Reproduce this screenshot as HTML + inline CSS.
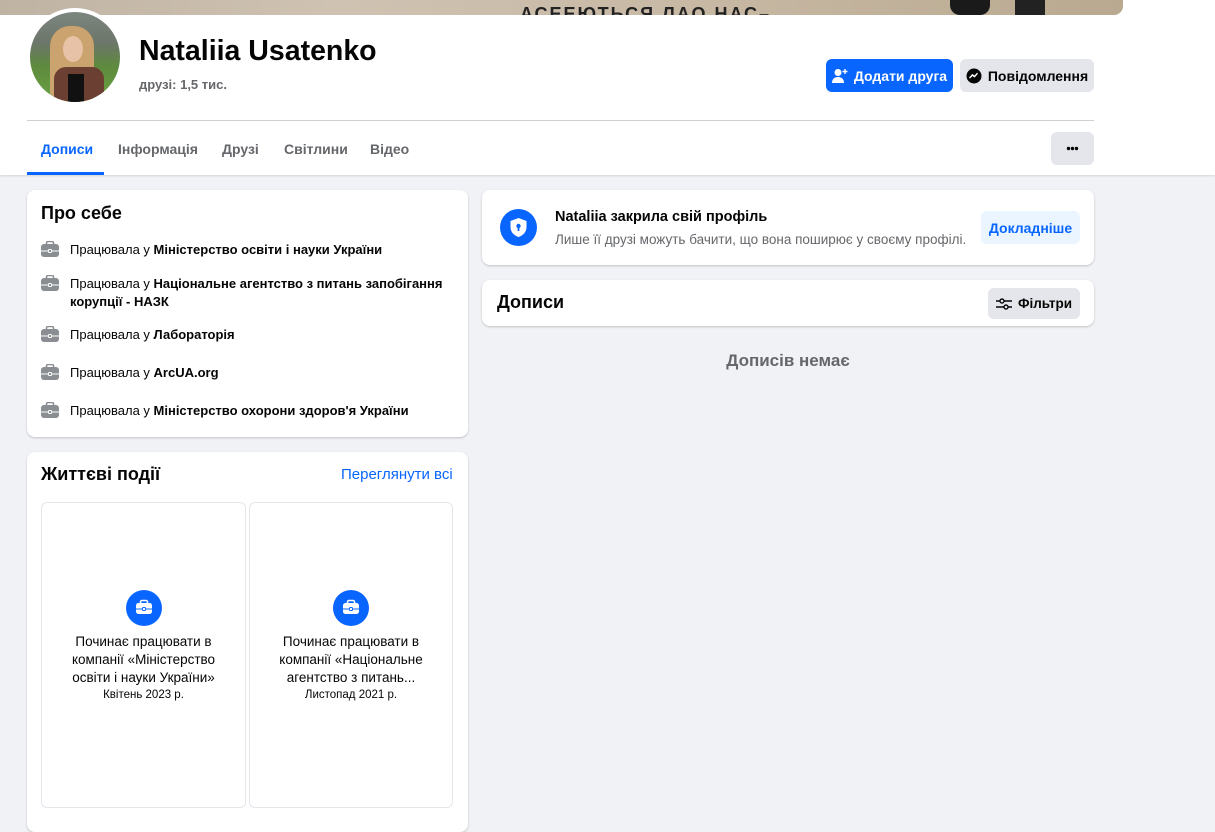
<!DOCTYPE html>
<html><head><meta charset="utf-8"><style>
*{box-sizing:border-box;margin:0;padding:0}
body{width:1215px;height:823px;overflow:hidden;background:#f0f2f5;font-family:"Liberation Sans","DejaVu Sans",sans-serif;color:#050505;position:relative}
.abs{position:absolute}
.hdr{left:0;top:0;width:1215px;height:175px;background:#fff;box-shadow:0 1px 2px rgba(0,0,0,.12)}
.cover{left:0;top:0;width:1123px;height:15px;background:linear-gradient(90deg,#bfb3a4,#cfc2b2 30%,#c8b9a5 60%,#b9a990);border-bottom-right-radius:9px;overflow:hidden}
.card{background:#fff;border-radius:8px;box-shadow:0 1px 2px rgba(0,0,0,.2)}
.btn{border-radius:6px;font-size:14px;font-weight:bold;display:flex;align-items:center;justify-content:center;gap:6px}
.tab{top:141px;font-size:14px;font-weight:bold;color:#65676b}
.row{position:absolute;left:41px;font-size:13px;line-height:18px;color:#050505;padding-left:29px}
.row b{font-weight:bold}
.bag{position:absolute;left:0;top:0;width:18px;height:16px}
.tile{position:absolute;top:502px;height:306px;border:1px solid #e4e6eb;border-radius:6px;text-align:center;font-size:13.5px;line-height:18px}
.tile .ic{position:absolute;left:50%;top:87px;margin-left:-18px;width:36px;height:36px;border-radius:50%;background:#0866ff}
</style></head><body>
<div class="abs hdr"></div>
<div class="abs cover">
<div class="abs" style="left:520px;top:4px;font-size:18px;font-weight:bold;color:#222;letter-spacing:2px">АСЕЕЮТЬСЯ ЛАО НАС–</div>
<div class="abs" style="left:950px;top:0;width:40px;height:15px;background:#1a1a1a;border-radius:0 0 10px 10px"></div>
<div class="abs" style="left:1015px;top:0;width:30px;height:15px;background:#222"></div>
</div>
<div class="abs" style="left:26px;top:8px;width:98px;height:98px;border-radius:50%;background:#fff"></div>
<div class="abs" style="left:30px;top:12px;width:90px;height:90px;border-radius:50%;overflow:hidden;background:linear-gradient(#7d8580 0,#6c7669 35%,#5e8a3e 60%,#6aa342 100%)">
<div class="abs" style="left:20px;top:14px;width:44px;height:80px;border-radius:20px 20px 0 0;background:#caa36f"></div>
<div class="abs" style="left:33px;top:24px;width:20px;height:26px;border-radius:50%;background:#e7c2a6"></div>
<div class="abs" style="left:24px;top:55px;width:50px;height:40px;border-radius:12px 12px 0 0;background:#6b3f32"></div>
<div class="abs" style="left:38px;top:62px;width:16px;height:30px;background:#111"></div>
</div>
<div class="abs" style="left:139px;top:35px;font-size:28.5px;font-weight:bold">Nataliia Usatenko</div>
<div class="abs" style="left:139px;top:77px;font-size:13px;font-weight:bold;color:#65676b">друзі: 1,5 тис.</div>
<div class="abs btn" style="left:826px;top:59px;width:127px;height:33px;background:#0866ff;color:#fff">
<svg width="16" height="16" viewBox="0 0 16 16"><circle cx="6" cy="4.5" r="3.5" fill="#fff"/><path d="M0 15c0-4 2.5-6 6-6s6 2 6 6z" fill="#fff"/><path d="M13 1v5M10.5 3.5h5" stroke="#fff" stroke-width="1.4"/></svg>Додати друга</div>
<div class="abs btn" style="left:960px;top:59px;width:134px;height:33px;background:#e4e6eb">
<svg width="16" height="16" viewBox="0 0 16 16"><circle cx="8" cy="8" r="7.5" fill="#050505"/><path d="M3.5 10l3-3.2 2 1.6 3-3.2-3 3.5-2-1.6z" stroke="#fff" stroke-width="1.3" fill="none"/></svg>Повідомлення</div>
<div class="abs" style="left:27px;top:120px;width:1067px;height:1px;background:#ced0d4"></div>
<div class="abs tab" style="left:41px;color:#0866ff">Дописи</div>
<div class="abs" style="left:27px;top:172px;width:77px;height:3px;background:#0866ff"></div>
<div class="abs tab" style="left:118px">Інформація</div>
<div class="abs tab" style="left:222px">Друзі</div>
<div class="abs tab" style="left:284px">Світлини</div>
<div class="abs tab" style="left:370px">Відео</div>
<div class="abs" style="left:1051px;top:132px;width:43px;height:33px;background:#e4e6eb;border-radius:6px">
<svg width="43" height="33"><circle cx="17.5" cy="16.5" r="1.7" fill="#050505"/><circle cx="21.5" cy="16.5" r="1.7" fill="#050505"/><circle cx="25.5" cy="16.5" r="1.7" fill="#050505"/></svg></div>

<div class="abs card" style="left:27px;top:190px;width:441px;height:247px"></div>
<div class="abs" style="left:41px;top:203px;font-size:18px;font-weight:bold">Про себе</div>
<svg width="0" height="0" style="position:absolute"><defs><g id="bag"><rect x="5.5" y="0.5" width="7" height="4" rx="1.5" fill="none" stroke="#8a8d91" stroke-width="1.6"/><rect x="0" y="3" width="18" height="13" rx="3" fill="#8a8d91"/><path d="M0 10h18" stroke="#fff" stroke-width="1"/><rect x="7.5" y="8.5" width="3" height="3" rx=".8" fill="#8a8d91" stroke="#fff" stroke-width=".9"/></g></defs></svg>
<div class="row" style="top:241px"><svg class="bag"><use href="#bag"/></svg>Працювала у <b>Міністерство освіти і науки України</b></div>
<div class="row" style="top:275px;width:420px"><svg class="bag"><use href="#bag"/></svg>Працювала у <b>Національне агентство з питань запобігання корупції - НАЗК</b></div>
<div class="row" style="top:326px"><svg class="bag"><use href="#bag"/></svg>Працювала у <b>Лабораторія</b></div>
<div class="row" style="top:364px"><svg class="bag"><use href="#bag"/></svg>Працювала у <b>ArcUA.org</b></div>
<div class="row" style="top:402px"><svg class="bag"><use href="#bag"/></svg>Працювала у <b>Міністерство охорони здоров'я України</b></div>

<div class="abs card" style="left:27px;top:452px;width:441px;height:380px"></div>
<div class="abs" style="left:41px;top:464px;font-size:18px;font-weight:bold">Життєві події</div>
<div class="abs" style="left:341px;top:466px;font-size:15px;color:#0866ff">Переглянути всі</div>
<svg width="0" height="0" style="position:absolute"><defs><g id="wbag"><rect x="14.5" y="10.5" width="7" height="4" rx="1.5" fill="none" stroke="#fff" stroke-width="1.6"/><rect x="10" y="13" width="16" height="11" rx="2.5" fill="#fff"/><path d="M10 19h16" stroke="#0866ff" stroke-width="1"/><rect x="16.5" y="17.5" width="3" height="3" rx=".8" fill="#fff" stroke="#0866ff" stroke-width=".9"/></g></defs></svg>
<div class="tile" style="left:41px;width:205px"><div class="ic"><svg width="36" height="36"><use href="#wbag"/></svg></div>
<div style="position:absolute;top:130px;left:0;right:0;padding:0 18px">Починає працювати в компанії «Міністерство освіти і науки України»<div style="font-size:11.5px;line-height:16px">Квітень 2023 р.</div></div></div>
<div class="tile" style="left:249px;width:204px"><div class="ic"><svg width="36" height="36"><use href="#wbag"/></svg></div>
<div style="position:absolute;top:130px;left:0;right:0;padding:0 18px">Починає працювати в компанії «Національне агентство з питань...<div style="font-size:11.5px;line-height:16px">Листопад 2021 р.</div></div></div>

<div class="abs card" style="left:482px;top:190px;width:612px;height:75px"></div>
<div class="abs" style="left:500px;top:209px;width:37px;height:37px;border-radius:50%;background:#0866ff">
<svg width="37" height="37" viewBox="0 0 37 37"><path d="M18.5 9l8 3v6c0 5-3.5 8.5-8 10-4.5-1.5-8-5-8-10v-6z" fill="#fff"/><circle cx="18.5" cy="17" r="2.2" fill="#0866ff"/><rect x="17.6" y="17" width="1.8" height="5" fill="#0866ff"/></svg></div>
<div class="abs" style="left:555px;top:209px;font-size:14.5px;font-weight:bold">Nataliia закрила свій профіль</div>
<div class="abs" style="left:555px;top:232px;font-size:13.5px;color:#65676b">Лише її друзі можуть бачити, що вона поширює у своєму профілі.</div>
<div class="abs btn" style="left:981px;top:211px;width:99px;height:33px;background:#ebf5ff;color:#0866ff">Докладніше</div>

<div class="abs card" style="left:482px;top:280px;width:612px;height:46px"></div>
<div class="abs" style="left:497px;top:292px;font-size:18px;font-weight:bold">Дописи</div>
<div class="abs btn" style="left:988px;top:288px;width:92px;height:31px;background:#e4e6eb;font-size:13.5px">
<svg width="16" height="14" viewBox="0 0 16 14"><path d="M0 4h4M8 4h8M0 10h8M12 10h4" stroke="#050505" stroke-width="1.4"/><circle cx="6" cy="4" r="2" fill="none" stroke="#050505" stroke-width="1.4"/><circle cx="10" cy="10" r="2" fill="none" stroke="#050505" stroke-width="1.4"/></svg>Фільтри</div>
<div class="abs" style="left:482px;width:612px;top:351px;text-align:center;font-size:17px;font-weight:bold;color:#65676b">Дописів немає</div>
</body></html>
